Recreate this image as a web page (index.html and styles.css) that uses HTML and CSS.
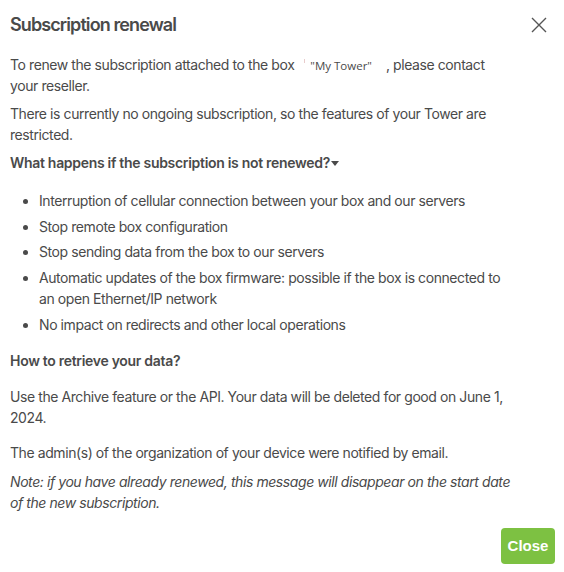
FILE: index.html
```html
<!DOCTYPE html>
<html lang="en">
<head>
<meta charset="utf-8">
<title>Subscription renewal</title>
<link rel="stylesheet" href="styles.css">
</head>
<body>
<div class="modal">
  <header class="modal-header">
    <h2 class="modal-title">Subscription renewal</h2>
    <button class="close-x" aria-label="Close">
      <svg width="16" height="16" viewBox="0 0 16 16"><path d="M1 1 L15 15 M15 1 L1 15" stroke="#555" stroke-width="1.4" fill="none"/></svg>
    </button>
  </header>
  <div class="modal-body">
    <p class="para">To renew the subscription attached to the box<span class="box-mark"></span><span class="box-name">"My Tower"</span>, please contact your reseller.</p>
    <p class="para">There is currently no ongoing subscription, so the features of your Tower are restricted.</p>
    <p class="heading">What happens if the subscription is not renewed? <span class="caret"></span></p>
    <ul class="list">
      <li>Interruption of cellular connection between your box and our servers</li>
      <li>Stop remote box configuration</li>
      <li>Stop sending data from the box to our servers</li>
      <li>Automatic updates of the box firmware: possible if the box is connected to an open Ethernet/IP network</li>
      <li>No impact on redirects and other local operations</li>
    </ul>
    <p class="heading heading-2">How to retrieve your data?</p>
    <p class="para para-data">Use the Archive feature or the API. Your data will be deleted for good on June 1, 2024.</p>
    <p class="para">The admin(s) of the organization of your device were notified by email.</p>
    <p class="para note">Note: if you have already renewed, this message will disappear on the start date of the new subscription.</p>
  </div>
  <footer class="modal-footer">
    <button class="btn-close">Close</button>
  </footer>
</div>
</body>
</html>
```

FILE: styles.css
```css
html, body {
  margin: 0;
  padding: 0;
  background: #fff;
}
body {
  font-family: Inter, "Noto Sans", sans-serif;
  color: #4a4a4a;
  font-size: 14px;
  line-height: 21px;
  letter-spacing: -0.42px;
}
.modal {
  width: 564px;
  box-sizing: border-box;
  padding: 0 10px;
}
.modal-header {
  display: flex;
  justify-content: space-between;
  align-items: center;
  height: 50px;
}
.modal-title {
  margin: 0;
  font-size: 18px;
  font-weight: 600;
  letter-spacing: -0.9px;
  color: #4a4a4a;
  line-height: 24px;
}
.close-x {
  border: 0;
  background: none;
  padding: 0;
  margin-right: 7px;
  width: 16px;
  height: 16px;
  display: flex;
}
.modal-body {
  padding-top: 4px;
  padding-right: 42px;
}
.para {
  margin: 0 0 7px;
}
.heading {
  margin: 0;
  font-weight: 600;
  letter-spacing: -0.3px;
}
.caret {
  display: inline-block;
  width: 0;
  height: 0;
  border-left: 4px solid transparent;
  border-right: 4px solid transparent;
  border-top: 5px solid #4a4a4a;
  vertical-align: middle;
  margin-left: -2px;
  position: relative;
  top: -1px;
}
.box-mark {
  display: inline-block;
  width: 1px;
  height: 4px;
  background: #e8cccc;
  vertical-align: 7px;
  margin: 0 5px 0 10px;
}
.box-name {
  font-family: "Open Sans", sans-serif;
  font-size: 11.5px;
  line-height: 1;
  letter-spacing: 0;
  margin-right: 14px;
}
.list {
  margin: 17px 0 0;
  padding-left: 29px;
}
.list li {
  margin-bottom: 4.7px;
}
.list li:last-child {
  margin-bottom: 0;
}
.heading-2 {
  margin-top: 15px;
}
.para-data {
  margin-top: 15px;
  margin-bottom: 14px;
}
.note {
  font-style: italic;
  margin-top: 8px;
}
.modal-footer {
  display: flex;
  justify-content: flex-end;
  padding-top: 8px;
}
.btn-close {
  background: #7dc142;
  color: #fff;
  border: 0;
  border-radius: 4px;
  font-family: "Liberation Sans", Arial, sans-serif;
  font-weight: 700;
  font-size: 15px;
  letter-spacing: 0;
  width: 54px;
  height: 36px;
  padding: 0;
  margin-right: -1px;
}
```
